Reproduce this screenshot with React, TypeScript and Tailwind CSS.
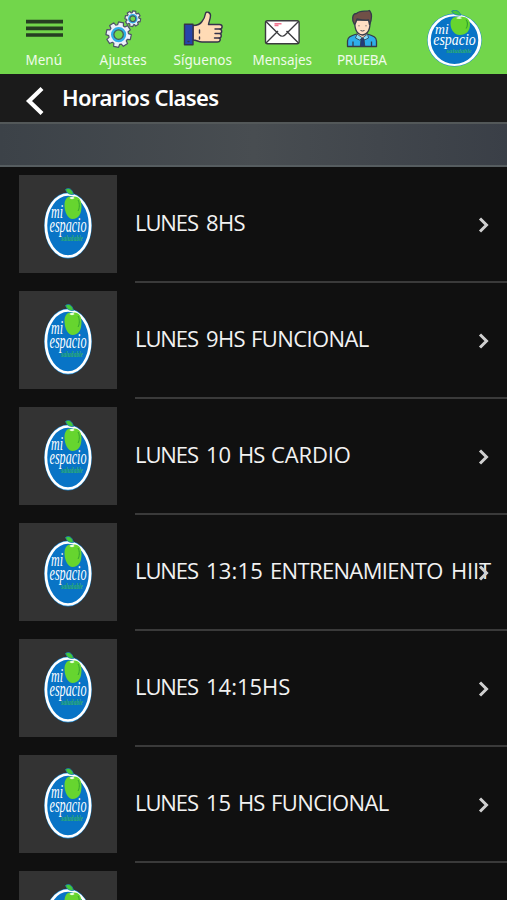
import React from "react";

type IconProps = { className?: string };

function Logo({ className }: IconProps) {
  return (
    <svg viewBox="0 0 48 71" preserveAspectRatio="none" className={className}>
      <ellipse cx="24" cy="37.5" rx="23.8" ry="33" fill="#1686d2" />
      <ellipse cx="24" cy="37.5" rx="22.1" ry="31" fill="#0874c6" stroke="#fff" strokeWidth="2.7" />
      <path d="M28 9C24 7 20.5 11 20.5 17c0 8 4 14 8 14 6 0 9-5 9-13 0-7-4-11-9.500-9Z" fill="#66d52f" />
      <path d="M34 12c2 3 1.500 9 0 11" fill="none" stroke="#33a52f" strokeWidth="1" />
      <path d="M21.500 1.500c3-2.500 7-.5 8 5-4 .3-6.500-1-8-5Z" fill="#44c83b" stroke="#187cae" strokeWidth=".8" />
      <path d="M25.500 10c2-1.800 3.500-1.400 5 0-1 1.500-4 1.500-5 0Z" fill="#e9ffd9" />
      <g fontFamily="Liberation Serif, serif" fontStyle="italic">
        <text x="7" y="30" fontSize="19" textLength="12" lengthAdjust="spacingAndGlyphs" fill="#fff">mi</text>
        <text x="5.500" y="43.500" fontSize="20" textLength="37" lengthAdjust="spacingAndGlyphs" fill="#fff">espacio</text>
        <text x="17" y="53" fontSize="8" fontWeight="bold" textLength="22" lengthAdjust="spacingAndGlyphs" fill="#2fae6c">saludable</text>
      </g>
    </svg>
  );
}

// Outline of an eight-toothed wheel of the given radius, centred on the origin.
function gearOutline(r: number) {
  const points: string[] = [];
  for (let i = 0; i < 8; i++) {
    const mid = (i * Math.PI) / 4 + 0.2;
    const corners = [
      [-0.3, 0.78],
      [-0.2, 1],
      [0.2, 1],
      [0.3, 0.78],
    ];
    for (const [a, k] of corners) {
      points.push(`${(Math.cos(mid + a) * r * k).toFixed(2)},${(Math.sin(mid + a) * r * k).toFixed(2)}`);
    }
  }
  return points.join(" ");
}

function Gear({ x, y, r }: { x: number; y: number; r: number }) {
  return (
    <g transform={`translate(${x} ${y})`}>
      <polygon points={gearOutline(r)} fill="#eef0fa" stroke="#4d5368" strokeWidth="1.200" strokeLinejoin="round" />
      <circle r={r * 0.5} fill="#72d64b" stroke="#30aeea" strokeWidth={r * 0.2} />
      <circle r={r * 0.37} fill="#72d64b" stroke="#3f5568" strokeWidth="1.200" />
    </g>
  );
}

function MenuIcon() {
  return (
    <svg className="block h-10 w-10" viewBox="0 0 40 40">
      <path d="M2 13.700h37M2 20.300h37M2 27h37" stroke="#263e22" strokeWidth="3.700" />
    </svg>
  );
}

function GearsIcon() {
  return (
    <svg className="block h-10 w-10" viewBox="0 0 40 40">
      <Gear x={15.600} y={26.600} r={12.700} />
      <Gear x={29.800} y={10.700} r={7.900} />
    </svg>
  );
}

function ThumbIcon() {
  return (
    <svg className="block h-10 w-10" viewBox="0 0 40 40" stroke="#35334b" strokeWidth="1.400" strokeLinejoin="round" strokeLinecap="round">
      <path d="M10 17.500c5 0 7-1 9-4 2.500-3 3-5 3.500-8 .4-2.500 5-1.500 5 2 0 3-1.500 6-2 9h11c3.500 0 3.500 4.500 0 4.500 3 .5 2.800 4.500 0 4.500 2.500.5 2.300 4.500-.5 4.500 2 .6 1.500 4-1.500 4H19c-4 0-5-2-9-2Z" fill="#ffdbb5" />
      <path d="M1.500 16.200H10v20.600H1.500Z" fill="#2644aa" />
      <path d="M16.500 22v3M16.500 29v2M32 21h4M32 25.500h4M31.500 30h4M5 33.500h1" fill="none" />
    </svg>
  );
}

function MailIcon() {
  return (
    <svg className="block h-10 w-10" viewBox="0 0 40 40" stroke="#3b3b3f" strokeWidth="1.400" strokeLinejoin="round">
      <rect x="3.500" y="12.700" width="33.600" height="23" rx="2" fill="#fff" />
      <path d="m4 35 12-12M36.500 35l-12-12M4 13.500 17.500 27c1.500 1.500 4 1.500 5.500 0l13.500-13.500" fill="none" />
      <path d="M12.500 15.800h7M12.500 17.500h4" stroke="#f17490" />
    </svg>
  );
}

function PersonIcon() {
  return (
    <svg className="block h-10 w-10" viewBox="0 0 40 40" stroke="#343b4a" strokeWidth="1.300" strokeLinejoin="round">
      <path d="M5.500 38.500V33c0-4 3-5 9.500-7h10c6.500 2 9.500 3 9.500 7v5.500Z" fill="#2eaee9" />
      <path d="M15.500 23h9.500v5l-4.700 4-4.800-4Z" fill="#ffd4b5" stroke="none" />
      <path d="M13 12h15c.5 8-1 14-7.500 15C14 26.500 12.300 20 13 12Z" fill="#ffdec4" />
      <path d="M12.500 16.500c-3-4-2.500-11 2-11 4-3.500 9-1.500 13-3 1 2 2.500 3 2 6 0 3-.5 5-2 8l-1-4.500c-5 .5-9-.5-11.500-1-1 2-.5 3.500-2.500 5.500Z" fill="#705047" />
      <path d="m15 26 5.500 4 5-4 1 4-4 2-2-2-3 2-4-2Z" fill="#89ddfa" strokeWidth=".8" />
      <path d="m19 31 1.500-1 1.500 1 .8 7.500h-4.500Z" fill="#233c7a" strokeWidth=".8" />
      <path d="M11 33.500v5M29.500 33.500v5" />
      <path d="M17 17.300v1M24 17.300v1M18.500 22.500q2 1 4 0" fill="none" strokeWidth=".9" />
    </svg>
  );
}

const tabs = [
  { label: "Menú", icon: <MenuIcon />, track: "tracking-[0px]" },
  { label: "Ajustes", icon: <GearsIcon />, track: "tracking-[0.2px]" },
  { label: "Síguenos", icon: <ThumbIcon />, track: "tracking-[0.05px]" },
  { label: "Mensajes", icon: <MailIcon />, track: "tracking-[-0.05px]" },
  { label: "PRUEBA", icon: <PersonIcon />, track: "tracking-[-0.3px]" },
];

type Word = [text: string, style: string];

const lunes: Word = ["LUNES ", "w-[71px] tracking-[-1.1px]"];
const hs: Word = ["HS ", "w-[33px] tracking-[-1px]"];
const funcional: Word = ["FUNCIONAL", "tracking-[-0.6px]"];

const classes: Word[][] = [
  [lunes, ["8HS", "tracking-[-0.6px]"]],
  [lunes, ["9HS ", "w-[45px] tracking-[-0.6px]"], funcional],
  [lunes, ["10 ", "w-8"], hs, ["CARDIO", "tracking-[-0.15px]"]],
  [
    lunes,
    ["13:15 ", "w-16 tracking-[0.2px]"],
    ["ENTRENAMIENTO ", "w-[181px] tracking-[-0.65px]"],
    ["HIIT", "tracking-[-0.2px]"],
  ],
  [lunes, ["14:15HS", "tracking-[0px]"]],
  [lunes, ["15 ", "w-8"], hs, funcional],
  [],
];

export default function App() {
  return (
    <div className="flex h-[900px] w-[507px] flex-col overflow-hidden bg-[#101010] font-['Noto_Sans',sans-serif] text-white">
      <header className="flex h-[74px] shrink-0 bg-[#72d64b] pl-1">
        {tabs.map((t) => (
          <div key={t.label} className="flex w-[79.5px] flex-col items-center pt-2">
            {t.icon}
            <span className={`mt-0.5 text-[13.5px] leading-5 whitespace-nowrap text-[#effbe9] ${t.track}`}>{t.label}</span>
          </div>
        ))}
        <Logo className="mt-2.5 ml-[25px] block h-[57px] w-[55px]" />
      </header>
      <div className="flex h-12 shrink-0 items-center bg-[#1b1b1b] pl-[25px]">
        <svg className="mt-1.5 h-8 w-5" viewBox="0 0 20 32" fill="none">
          <path d="M17 3.500 4 16l13 12.500" stroke="#fff" strokeWidth="4.200" />
        </svg>
        <h1 className="ml-[17px] pb-0.5 text-[22px] leading-8 font-semibold tracking-[-0.62px]">Horarios Clases</h1>
      </div>
      <div className="h-[45px] shrink-0 border-y-2 border-t-[#535859] border-b-[#565d60] bg-linear-to-r from-[#3c4248] via-[#484d51] to-[#3a3f47]" />
      <main>
        {classes.map((words, i) => (
          <div key={i} className="flex h-[116px] pl-[19px]">
            <div className="mt-2 flex size-[98px] shrink-0 justify-center bg-[#333]">
              <Logo className="mt-[13px] block h-[71px] w-12" />
            </div>
            <div className="ml-[18px] flex min-w-0 grow items-center border-b-2 border-[#3a3a3a]">
              <div className="flex w-0 grow pb-[3px] font-['Open_Sans',sans-serif] text-[22px] whitespace-pre text-[#f2f2f2]">
                {words.map(([text, style]) => (
                  <span key={text} className={`shrink-0 ${style}`}>
                    {text}
                  </span>
                ))}
              </div>
              <svg className="mt-0.5 mr-[17px] h-5 w-3 shrink-0" viewBox="0 0 12 20" fill="none">
                <path d="m2 3.500 6.500 6.500L2 16.500" stroke="#d0d0d0" strokeWidth="3" />
              </svg>
            </div>
          </div>
        ))}
      </main>
    </div>
  );
}
